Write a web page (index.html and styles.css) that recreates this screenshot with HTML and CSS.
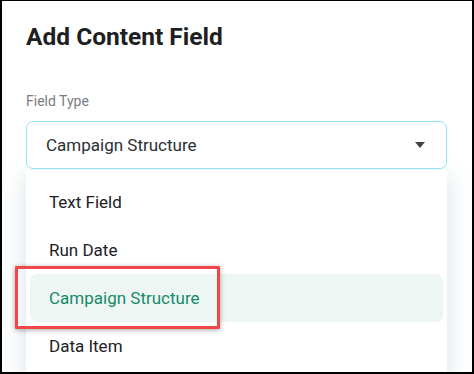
FILE: index.html
```html
<!DOCTYPE html>
<html lang="en">

<head>
  <meta charset="UTF-8">
  <meta name="viewport" content="width=device-width, initial-scale=1.0">
  <title>Add Content Field</title>
  <link rel="stylesheet" href="styles.css">
</head>

<body>
  <div class="frame">
    <h1 class="title">Add Content Field</h1>

    <label class="field-label">Field Type</label>

    <div class="select">
      <span class="select-value">Campaign Structure</span>
      <span class="select-arrow"></span>
    </div>

    <ul class="menu">
      <li class="menu-item">Text Field</li>
      <li class="menu-item">Run Date</li>
      <li class="menu-item selected">
        Campaign Structure
        <span class="callout"></span>
      </li>
      <li class="menu-item">Data Item</li>
    </ul>
  </div>
</body>

</html>
```

FILE: styles.css
```css
:root {
  --text-dark: #202124;
  --label-grey: #7a7d82;
  --select-border: #93e3f7;
  --active-bg: #eef6f3;
  --active-text: #178a69;
  --callout-red: #f0474b;
}

html,
body {
  margin: 0;
  padding: 0;
  background: #fff;
}

body {
  font-family: Roboto, "Liberation Sans", sans-serif;
  color: var(--text-dark);
}

.frame {
  box-sizing: border-box;
  width: 474px;
  height: 374px;
  border: 2px solid #000;
  border-top-width: 1px;
  padding: 22px 25px 0 24px;
  overflow: hidden;
}

.title {
  margin: 0;
  font-size: 24.5px;
  line-height: 28px;
  font-weight: 700;
  color: #1d1f22;
}

.field-label {
  display: block;
  margin-top: 40px;
  font-size: 14px;
  line-height: 20px;
  color: var(--label-grey);
}

.select {
  box-sizing: border-box;
  display: flex;
  align-items: center;
  justify-content: space-between;
  height: 48px;
  margin-top: 10px;
  padding: 0 21px 0 19px;
  border: 1.5px solid var(--select-border);
  border-radius: 7px;
  background: #fff;
  position: relative;
  z-index: 2;
}

.select-value {
  font-size: 17px;
  color: #2b2f36;
}

.select-arrow {
  width: 0;
  height: 0;
  border-left: 5px solid transparent;
  border-right: 5px solid transparent;
  border-top: 6px solid #444;
}

.menu {
  list-style: none;
  margin: 1px 0 0;
  padding: 8px 4px;
  background: #fff;
  border-radius: 4px;
  box-shadow: 0 6px 24px rgba(110, 160, 175, 0.3);
}

.menu-item {
  position: relative;
  height: 48px;
  line-height: 49px;
  padding-left: 19px;
  font-size: 17px;
  color: var(--text-dark);
  border-radius: 7px;
}

.menu-item.selected {
  background: var(--active-bg);
  color: var(--active-text);
}

/* annotation box drawn over the selected option */
.callout {
  position: absolute;
  left: -15px;
  top: -8px;
  width: 205px;
  height: 63px;
  box-sizing: border-box;
  border: 3px solid var(--callout-red);
  border-radius: 1px;
  box-shadow: 0 1px 5px rgba(0, 0, 0, 0.35);
}
```
